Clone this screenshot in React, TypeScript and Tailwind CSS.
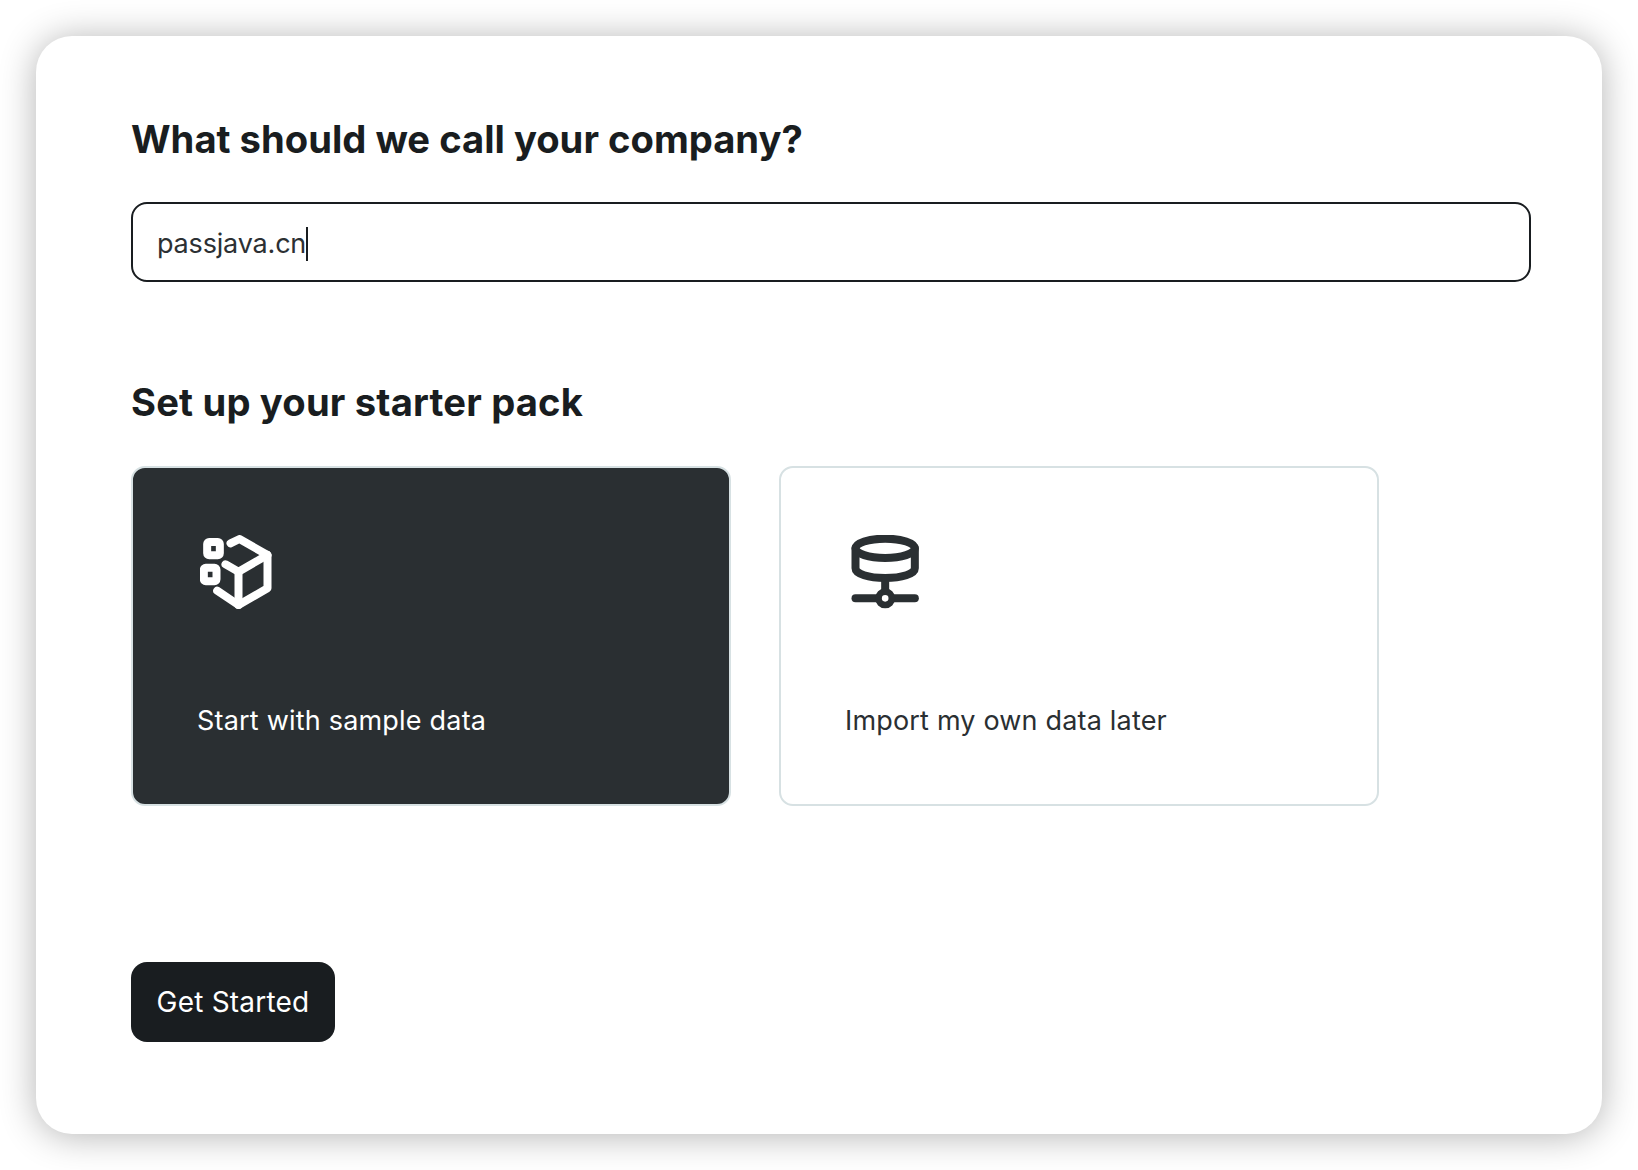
import React from 'react';

function SampleIcon() {
    return (
        <svg className="ml-[3px]" width="72" height="74" viewBox="240 225 215 222" fill="none" stroke="#ffffff" strokeWidth="24" strokeLinecap="round" strokeLinejoin="round">
            <rect x="261" y="246" width="38" height="40" rx="6" />
            <rect x="251" y="323" width="38" height="41" rx="6" />
            <path d="M331 250 L358 237 L442 285 L442 385 L355 435 L291 392" />
            <path d="M316 313 L355 335 L442 285" />
            <path d="M355 335 L355 435" />
        </svg>
    );
}

function ImportIcon() {
    return (
        <svg className="ml-[5px]" width="72" height="74" viewBox="240 225 215 222" fill="none" stroke="#2a2f32" strokeWidth="24" strokeLinecap="round" strokeLinejoin="round">
            <ellipse cx="345" cy="265" rx="89" ry="29" />
            <path d="M256 265 L256 325 C256 342 295 354 345 354 C395 354 434 342 434 325 L434 265" />
            <path d="M345 354 L345 395" />
            <path d="M256 415 L434 415" />
            <circle cx="345" cy="415" r="20" fill="#ffffff" strokeWidth="20" />
        </svg>
    );
}

export default function App() {
    return (
        <div className="w-[1638px] h-[1170px] bg-white p-9 font-['Inter',sans-serif]">
            <div className="h-[1098px] rounded-[36px] bg-white pl-[95px] pr-[71px] pt-[77px] shadow-[0_2px_36px_rgba(0,0,0,0.3)]">
                <h1 className="text-[38.2px] leading-[52px] font-bold text-[#191d20]">What should we call your company?</h1>

                <div className="mt-[37px] flex h-[80px] w-[1400px] items-center rounded-[16px] border-2 border-[#191d20] pl-6 pt-[4px] text-[27px] tracking-[-0.18px] text-[#2c3033]">
                    passjava.cn<span className="h-[34px] w-[2px] bg-[#191d20]"></span>
                </div>

                <h2 className="mt-[94px] text-[38.2px] leading-[52px] font-bold tracking-[0.17px] text-[#191d20]">Set up your starter pack</h2>

                <div className="mt-[38px] flex gap-[48px]">
                    <div className="flex h-[340px] w-[600px] flex-col rounded-[14px] border-2 border-[#d7e1e3] bg-[#2a2f32] pl-[64px] pt-[67px] text-white">
                        <SampleIcon />
                        <div className="mt-[92px] text-[27px] leading-[40px] tracking-[0.2px]">Start with sample data</div>
                    </div>
                    <div className="flex h-[340px] w-[600px] flex-col rounded-[14px] border-2 border-[#d7e1e3] bg-white pl-[64px] pt-[67px] text-[#2a2f32]">
                        <ImportIcon />
                        <div className="mt-[92px] text-[27px] leading-[40px] tracking-[0.18px]">Import my own data later</div>
                    </div>
                </div>

                <button className="mt-[156px] flex h-[80px] w-[204px] items-center justify-center rounded-[16px] bg-[#191d20] text-[28px] tracking-[0.2px] text-white">Get Started</button>
            </div>
        </div>
    );
}
